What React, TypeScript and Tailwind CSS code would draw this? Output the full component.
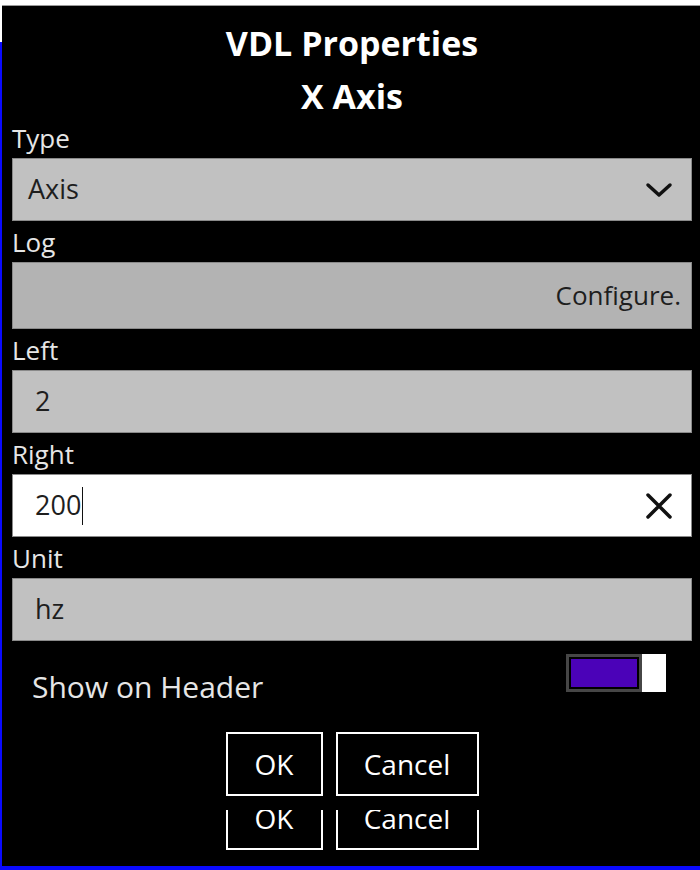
import React from "react";

const font = { fontFamily: '"Open Sans", "Noto Sans", sans-serif' };

const Label = ({ text }: { text: string }) => (
  <div className="h-[41px] pt-[6px] text-[26px] leading-[30px] text-[#e6e6e6]">{text}</div>
);

const Chevron = () => (
  <svg width="28" height="18" viewBox="0 0 28 18" fill="none">
    <polyline points="3,4 14,14 25,4" stroke="#111" strokeWidth="3.5" strokeLinecap="round" strokeLinejoin="round" />
  </svg>
);

const Cross = () => (
  <svg width="28" height="28" viewBox="0 0 28 28" fill="none">
    <path d="M3 3 L25 25 M25 3 L3 25" stroke="#111" strokeWidth="3.5" strokeLinecap="round" />
  </svg>
);

const Buttons = () => (
  <div className="flex justify-center gap-[13px]">
    <button className="w-[97px] h-[64px] border-2 border-white text-white text-[28px] bg-black">OK</button>
    <button className="w-[143px] h-[64px] border-2 border-white text-white text-[28px] bg-black">Cancel</button>
  </div>
);

const App = () => {
  return (
    <div className="w-[700px] h-[870px] bg-white flex flex-col overflow-hidden" style={font}>
      <div className="h-[5px] shrink-0" />
      <div className="h-px ml-[2px] bg-[#9a9a9a] shrink-0" />
      <div className="flex flex-1 min-h-0">
        <div className="w-[2px] flex flex-col">
          <div className="h-[36px] bg-white" />
          <div className="flex-1 bg-[#0a0aff]" />
        </div>
        <div className="flex-1 bg-black flex flex-col pl-[10px] pr-[8px]">
          <div className="pt-[11px] text-white font-bold text-[34px] text-center">
            <div className="h-[53px] leading-[53px]">VDL Properties</div>
            <div className="h-[53px] leading-[53px]">X Axis</div>
          </div>

          <div className="h-[35px] text-[26px] leading-[30px] text-[#e6e6e6]">Type</div>
          <div className="h-[63px] bg-[#c1c1c1] border border-[#8a8a8a] flex items-center justify-between pl-[15px] pr-[18px] text-[27px] text-[#1e1e1e]">
            <span>Axis</span>
            <Chevron />
          </div>

          <Label text="Log" />
          <div className="h-[67px] bg-[#b3b3b3] border border-[#8a8a8a] flex items-center justify-end pr-[10px] text-[26px] text-[#1e1e1e]">
            Configure.
          </div>

          <Label text="Left" />
          <div className="h-[63px] bg-[#c1c1c1] border border-[#8a8a8a] flex items-center pl-[22px] text-[27px] text-[#1e1e1e]">
            2
          </div>

          <Label text="Right" />
          <div className="h-[63px] bg-white border border-[#8a8a8a] flex items-center justify-between pl-[22px] pr-[18px] text-[27px] text-[#1e1e1e]">
            <div className="flex items-center">
              <span>200</span>
              <span className="w-px h-[38px] bg-[#111] ml-px" />
            </div>
            <Cross />
          </div>

          <Label text="Unit" />
          <div className="h-[63px] bg-[#c1c1c1] border border-[#8a8a8a] flex items-center pl-[22px] text-[27px] text-[#1e1e1e]">
            hz
          </div>

          <div className="flex items-start justify-between mt-[13px] pl-[20px] pr-[26px]">
            <div className="pt-[14px] text-[30px] leading-[38px] text-[#e6e6e6]">Show on Header</div>
            <div className="flex">
              <div className="w-[76px] h-[38px] border-[3px] border-[#464646] p-[2px] bg-black">
                <div className="w-full h-full bg-[#4b02b8]" />
              </div>
              <div className="w-[24px] h-[38px] bg-white" />
            </div>
          </div>

          <div className="mt-[26px]">
            <Buttons />
          </div>
          <div className="mt-[14px] h-[40px] overflow-hidden">
            <div className="-mt-[24px]">
              <Buttons />
            </div>
          </div>
        </div>
      </div>
      <div className="h-[4px] bg-[#0a0aff] shrink-0" />
    </div>
  );
};

export default App;
